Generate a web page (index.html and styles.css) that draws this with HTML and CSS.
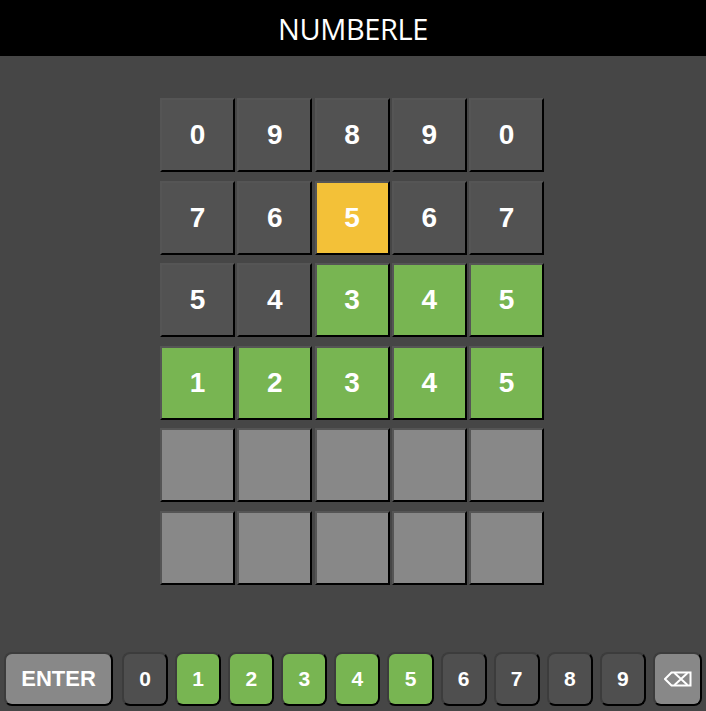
FILE: index.html
```html
<!DOCTYPE html>
<html>
<head>
<meta charset="utf-8">
<title>Numberle</title>
<link rel="stylesheet" href="styles.css">
</head>
<body>
<header class="header">NUMBERLE</header>
<main class="main">
  <div class="board">
    <div class="tile dark">0</div><div class="tile dark">9</div><div class="tile dark">8</div><div class="tile dark">9</div><div class="tile dark">0</div>
    <div class="tile dark">7</div><div class="tile dark">6</div><div class="tile yellow">5</div><div class="tile dark">6</div><div class="tile dark">7</div>
    <div class="tile dark">5</div><div class="tile dark">4</div><div class="tile green">3</div><div class="tile green">4</div><div class="tile green">5</div>
    <div class="tile green">1</div><div class="tile green">2</div><div class="tile green">3</div><div class="tile green">4</div><div class="tile green">5</div>
    <div class="tile empty"></div><div class="tile empty"></div><div class="tile empty"></div><div class="tile empty"></div><div class="tile empty"></div>
    <div class="tile empty"></div><div class="tile empty"></div><div class="tile empty"></div><div class="tile empty"></div><div class="tile empty"></div>
  </div>
</main>
<div class="keyboard">
  <div class="key key-gray key-enter">ENTER</div>
  <div class="key key-dark">0</div>
  <div class="key key-green">1</div>
  <div class="key key-green">2</div>
  <div class="key key-green">3</div>
  <div class="key key-green">4</div>
  <div class="key key-green">5</div>
  <div class="key key-dark">6</div>
  <div class="key key-dark">7</div>
  <div class="key key-dark">8</div>
  <div class="key key-dark">9</div>
  <div class="key key-gray key-back">
    <svg width="28" height="16" viewBox="0 0 28 16" fill="none" stroke="#fff" stroke-width="2">
      <path d="M1 8 L7.5 1.5 H26.5 V14.5 H7.5 Z"/>
      <path d="M10.5 2 L23.5 14 M23.5 2 L10.5 14"/>
    </svg>
  </div>
</div>
</body>
</html>
```

FILE: styles.css
```css
* { box-sizing: border-box; }
html, body { margin: 0; padding: 0; }
body {
  background: #464646;
  height: 100vh;
  display: flex;
  flex-direction: column;
  font-family: "Liberation Sans", Arial, sans-serif;
  color: #fff;
  overflow: hidden;
}
.header {
  background: #000;
  height: 56px;
  flex: none;
  display: flex;
  align-items: center;
  justify-content: center;
  font-family: "Open Sans", sans-serif;
  font-size: 29px;
  font-weight: 400;
  letter-spacing: -0.4px;
  padding-top: 0;
}
.main {
  display: flex;
  justify-content: center;
  padding-top: 42px;
  padding-right: 2px;
}
.board {
  display: grid;
  grid-template-columns: repeat(5, 75px);
  grid-auto-rows: 74px;
  column-gap: 2.25px;
  row-gap: 8.6px;
}
.tile {
  border-style: solid;
  border-width: 2px;
  border-color: #555 #000 #000 #555;
  display: flex;
  align-items: center;
  justify-content: center;
  font-weight: 700;
  font-size: 28px;
}
.dark { background: #525252; }
.yellow { background: #f3c138; }
.green { background: #78b552; }
.empty { background: #888; }
.keyboard {
  margin-top: auto;
  display: flex;
  gap: 7px;
  padding: 0 4px 5px 4px;
  height: 59px;
}
.key {
  width: 46.1px;
  height: 54px;
  border-radius: 8px;
  border-style: solid;
  border-width: 2px;
  border-color: #3c3c3c #000 #000 #3c3c3c;
  display: flex;
  align-items: center;
  justify-content: center;
  font-weight: 700;
  font-size: 21px;
  flex: none;
}
.key-dark { background: #4f4f4f; }
.key-green { background: #78b552; }
.key-gray { background: #888; }
.key-enter {
  width: 109px;
  margin-right: 2px;
  font-size: 22px;
}
.key-back { width: 49px; }
.key-back svg { display: block; margin-left: 2px; }
```
